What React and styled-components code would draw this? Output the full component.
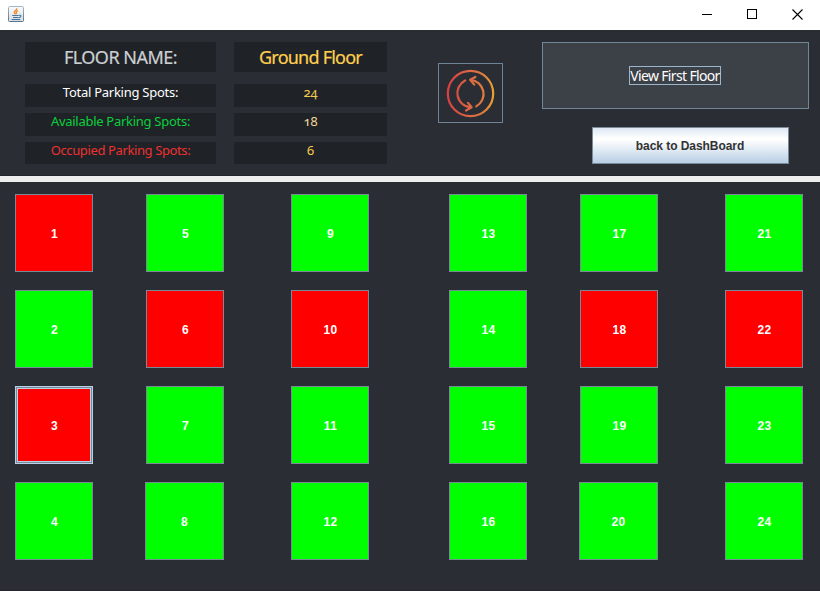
import React from 'react';
import styled, { createGlobalStyle, css } from 'styled-components';

const GlobalStyle = createGlobalStyle`
  * { box-sizing: border-box; }
  body { margin: 0; overflow: hidden; }
  button { margin: 0; padding: 0; border-radius: 0; }
`;

const Window = styled.div`
  width: 820px;
  height: 591px;
  display: flex;
  flex-direction: column;
  background: #eeeeee;
  font-family: 'Liberation Sans', Arial, sans-serif;
`;

const TitleBar = styled.header`
  height: 30px;
  flex: none;
  display: flex;
  align-items: center;
  justify-content: space-between;
  padding: 0 0 2px 8px;
  background: #ffffff;
`;

const WindowControls = styled.div`
  display: flex;
  height: 28px;
`;

const WindowButton = styled.button`
  width: 45px;
  display: flex;
  align-items: center;
  justify-content: center;
  border: 0;
  background: transparent;
`;

const Header = styled.section`
  height: 146px;
  flex: none;
  display: flex;
  align-items: flex-start;
  padding: 12px 11px 0 25px;
  background: #2a2d34;
  border-bottom: 1px solid #25262d;
`;

const Summary = styled.div`
  display: grid;
  grid-template-columns: 191px 153px;
  grid-template-rows: 36px 23px 23px 22px;
  column-gap: 18px;
  row-gap: 6px;
`;

const Cell = styled.div`
  display: flex;
  justify-content: center;
  background: #1f2327;
  color: ${(p) => p.$color};
  font-family: 'Noto Sans', 'Open Sans', sans-serif;
  font-size: 13px;
  line-height: 17px;
  letter-spacing: ${(p) => p.$spacing || 0}px;
  white-space: pre;
  font-feature-settings: 'onum' 1;
`;

const HeadingCell = styled(Cell)`
  height: 30px;
  font-size: 18px;
  line-height: 31px;
  -webkit-text-stroke: 0.2px currentColor;
`;

const RefreshButton = styled.button`
  width: 65px;
  height: 60px;
  margin: 21px 0 0 51px;
  display: flex;
  align-items: center;
  justify-content: center;
  border: 1px solid #6f8394;
  background: transparent;
`;

const Actions = styled.div`
  margin-left: auto;
  width: 267px;
  display: flex;
  flex-direction: column;
  align-items: flex-end;
  gap: 18px;
`;

const ViewFloorButton = styled.button`
  width: 267px;
  height: 67px;
  display: flex;
  align-items: center;
  justify-content: center;
  padding-right: 1px;
  border: 1px solid #728796;
  background: #3c4047;
`;

const FocusLabel = styled.span`
  width: 92px;
  height: 19px;
  display: flex;
  justify-content: center;
  border: 1px solid #9bb5cb;
  color: #ffffff;
  font-family: 'Noto Sans', sans-serif;
  font-size: 14px;
  line-height: 17px;
  letter-spacing: -0.65px;
  white-space: nowrap;
`;

const BackButton = styled.button`
  width: 197px;
  height: 37px;
  margin-right: 20px;
  padding: 1px 1px 0 0;
  border: 1px solid #7a8a99;
  background: linear-gradient(#dde8f3 0%, #ffffff 30%, #ffffff 34%, #b8cfe5 100%);
  color: #333333;
  font: bold 12px/34px 'Liberation Sans', Arial, sans-serif;
  letter-spacing: -0.06px;
`;

const Lot = styled.main`
  flex: 1;
  margin-top: 6px;
  padding: 12px 0 0 15px;
  display: grid;
  grid-auto-flow: column;
  grid-template-columns: 131px 145px 158px 131px 145px 78px;
  grid-template-rows: repeat(4, 78px);
  row-gap: 18px;
  background: #2a2d34;
  border-bottom: 1px solid #25262d;
`;

const Spot = styled.button`
  width: 78px;
  height: 78px;
  padding: 2px 0 0 1px;
  border: 1px solid #7a8a99;
  background: ${(p) => (p.$occupied ? '#ff0000' : '#00ff00')};
  color: #ffffff;
  font: bold 12px/74px 'Liberation Sans', Arial, sans-serif;
  letter-spacing: 0.3px;
  ${(p) => p.$wide && css`
    width: 79px;
    margin-left: -1px;
    padding-left: 0;
  `}
  ${(p) => p.$focused && css`
    border-color: #b8cfe5;
    box-shadow: inset 0 0 0 1px #7a8a99, inset 0 0 0 2px #b8cfe5;
  `}
`;

function JavaIcon() {
  return (
    <svg width="16" height="16" viewBox="0 0 16 16" fill="none">
      <defs>
        <linearGradient id="tile" x1="0" y1="0" x2="0" y2="1">
          <stop stopColor="#fafafa" />
          <stop offset="1" stopColor="#d7dde2" />
        </linearGradient>
        <linearGradient id="edge" x1="0" y1="0" x2="0" y2="1">
          <stop stopColor="#a9b7c2" />
          <stop offset="1" stopColor="#54748f" />
        </linearGradient>
      </defs>
      <rect x="0.5" y="0.5" width="15" height="15" rx="1" fill="url(#tile)" stroke="url(#edge)" />
      <path d="M8.7 2.2C9.5 4 5.5 5 6.3 6.6L7.5 8.4M10 4.7C8.3 5.3 7.5 6 8.8 7.8" stroke="#ee8623" strokeWidth="1.3" />
      <path d="M4.2 9.5h6.5M5 11.5h5.5M3.7 13.5h8.5M11 9.3c3-.6 2.3 2-.2 2.4" stroke="#40749f" strokeWidth="1.1" />
    </svg>
  );
}

function RefreshIcon() {
  return (
    <svg width="49" height="49" viewBox="0 0 49 49" fill="none">
      <defs>
        <linearGradient id="warm" gradientUnits="userSpaceOnUse" x1="1" y1="24" x2="48" y2="24">
          <stop stopColor="#d93f42" />
          <stop offset="0.5" stopColor="#dc6845" />
          <stop offset="0.8" stopColor="#df7e3c" />
          <stop offset="1" stopColor="#e7a52c" />
        </linearGradient>
      </defs>
      <g stroke="url(#warm)" strokeWidth="2.2" strokeLinecap="round" strokeLinejoin="round">
        <circle cx="24.5" cy="24.5" r="22.7" />
        <path d="M19.2 11.4A14.2 14.2 0 0 0 25 38.3" />
        <path d="M24.6 10.8A14.2 14.2 0 0 1 30.2 37.4" />
        <path d="M29.4 8L24.2 10.7L28.2 15.6" />
        <path d="M22 33.9L25.6 38.3L20 41.5" />
      </g>
    </svg>
  );
}

const heading = { label: 'FLOOR NAME:', value: 'Ground Floor' };
const stats = [
  { label: 'Total Parking Spots:', value: '24', color: '#ffffff', valueColor: '#f5ca50', spacing: -0.26 },
  { label: 'Available Parking Spots:', value: '18', color: '#0bcf3c', valueColor: '#f3d79a', spacing: -0.28 },
  { label: 'Occupied Parking Spots:', value: '6', color: '#ee3030', valueColor: '#f5ca50', spacing: -0.38 },
];
const occupied = new Set([1, 3, 6, 10, 18, 22]);
const wide = new Set([8, 20]);
const spots = Array.from({ length: 24 }, (_, i) => i + 1);

export default function App() {
  return (
    <Window>
      <GlobalStyle />
      <TitleBar>
        <JavaIcon />
        <WindowControls>
          <WindowButton aria-label="Minimize">
            <svg width="11" height="11"><path d="M0 5.5H10" stroke="#000" /></svg>
          </WindowButton>
          <WindowButton aria-label="Maximize">
            <svg width="11" height="11"><rect x="0.5" y="0.5" width="9" height="9" fill="none" stroke="#000" /></svg>
          </WindowButton>
          <WindowButton aria-label="Close">
            <svg width="11" height="11"><path d="M.5 .5L10.5 10.5M10.5 .5L.5 10.5" stroke="#000" strokeWidth="1.1" /></svg>
          </WindowButton>
        </WindowControls>
      </TitleBar>
      <Header>
        <Summary>
          <HeadingCell $color="#cccfd2" $spacing={-0.5}>{heading.label}</HeadingCell>
          <HeadingCell $color="#ffcf4d" $spacing={-0.78}>{heading.value}</HeadingCell>
          {stats.map((s) => (
            <React.Fragment key={s.label}>
              <Cell $color={s.color} $spacing={s.spacing}>{s.label}</Cell>
              <Cell $color={s.valueColor}>{s.value}</Cell>
            </React.Fragment>
          ))}
        </Summary>
        <RefreshButton aria-label="Refresh"><RefreshIcon /></RefreshButton>
        <Actions>
          <ViewFloorButton><FocusLabel>View First Floor</FocusLabel></ViewFloorButton>
          <BackButton>back to DashBoard</BackButton>
        </Actions>
      </Header>
      <Lot>
        {spots.map((n) => (
          <Spot key={n} $occupied={occupied.has(n)} $wide={wide.has(n)} $focused={n === 3}>{n}</Spot>
        ))}
      </Lot>
    </Window>
  );
}
